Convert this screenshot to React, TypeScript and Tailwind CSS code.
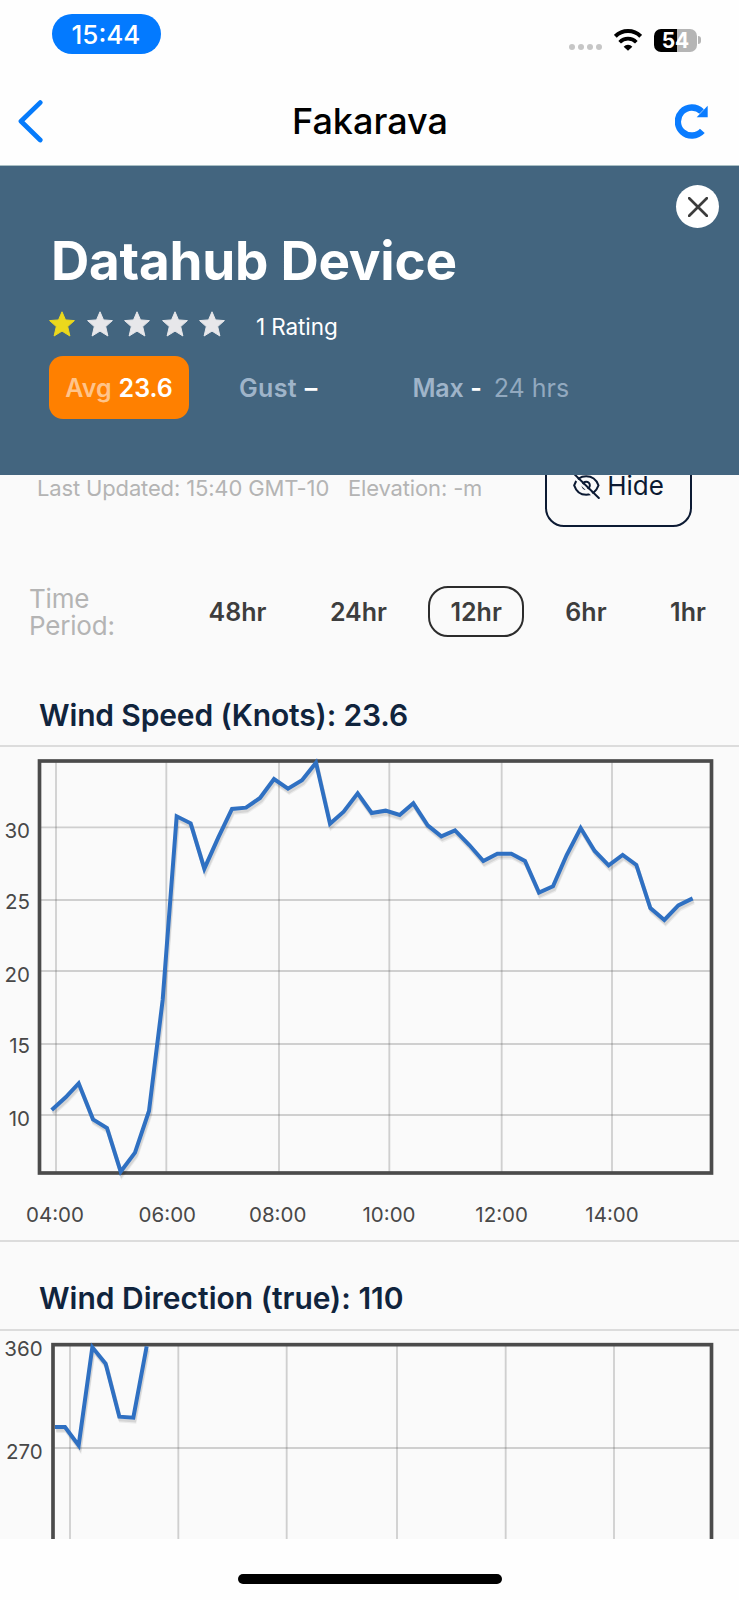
interface ChartProps {
  label: string;
  viewBox: string;
  className: string;
  frame: { x: number; y: number; width: number; height: number };
  xTicks: { x: number; text?: string; labelX?: number }[];
  yTicks: { y?: number; text: string; baseline: number }[];
  labelRight: number;
  points: string;
}

const periods = ["48hr", "24hr", "12hr", "6hr", "1hr"];

const speedPoints =
  "155,1110 197,1072 236,1030 279,1138 321,1164 362,1295 405,1238 447,1113 488,780 530,229 572,250 613,386 655,292 696,207 738,203 780,174 822,117 864,146 906,121 948,68 990,251 1031,215 1073,160 1115,219 1157,212 1199,225 1240,190 1283,256 1324,289 1365,271 1408,315 1450,363 1492,341 1534,341 1575,363 1617,458 1659,439 1700,345 1742,264 1784,333 1826,376 1868,345 1909,375 1951,504 1993,540 2035,496 2078,475";

const directionPoints =
  "165,531 195,531 236,586 277,292 317,341 358,500 400,503 440,289";

function Chart({ label, viewBox, className, frame, xTicks, yTicks, labelRight, points }: ChartProps) {
  const bottom = frame.y + frame.height;
  const right = frame.x + frame.width;

  return (
    <svg viewBox={viewBox} className={className} role="img" aria-label={label}>
      <g stroke="#545454" strokeOpacity="0.26" strokeWidth="5.5">
        {xTicks.map((tick) => (
          <line key={tick.x} x1={tick.x} x2={tick.x} y1={frame.y} y2={bottom} />
        ))}
        {yTicks.map((tick) =>
          tick.y ? <line key={tick.y} x1={frame.x} x2={right} y1={tick.y} y2={tick.y} /> : null
        )}
      </g>
      <rect {...frame} fill="none" stroke="#4b4b4b" strokeWidth="11" />
      <g fill="none" strokeLinejoin="miter">
        <polyline points={points} transform="translate(4 12)" stroke="#000" strokeOpacity="0.06" strokeWidth="12" />
        <polyline points={points} transform="translate(3 8)" stroke="#000" strokeOpacity="0.09" strokeWidth="12" />
        <polyline points={points} stroke="#2f70c2" strokeWidth="12" />
      </g>
      <g className="fill-[#484848] font-['Inter',sans-serif] text-[61.5px]">
        {yTicks.map((tick) => (
          <text key={tick.text} x={labelRight} y={tick.baseline} textAnchor="end">
            {tick.text}
          </text>
        ))}
        {xTicks.map((tick) =>
          tick.text ? (
            <text key={tick.text} x={tick.labelX} y={1446} textAnchor="middle">
              {tick.text}
            </text>
          ) : null
        )}
      </g>
    </svg>
  );
}

function Star({ filled }: { filled: boolean }) {
  return (
    <svg
      viewBox="0 0 26 26"
      className={filled ? "size-[26px] fill-[#ecd81c] stroke-[#ecd81c]" : "size-[26px] fill-[#e7e7ea] stroke-[#e7e7ea]"}
    >
      <path
        d="M13 0.8 L16.5 8.9 L25.4 9.6 L18.7 15.6 L20.9 25 L13 20.1 L5.1 25 L7.3 15.6 L0.6 9.6 L9.5 8.9 Z"
        strokeWidth="1"
        strokeLinejoin="round"
      />
    </svg>
  );
}

function StatusBar() {
  return (
    <div className="flex h-[78px] items-start justify-between pl-[52px] pr-[38px]">
      <div className="mt-[14px] flex h-[40px] w-[109px] items-center justify-center rounded-full bg-[#037aff] pr-[1px] text-[26px] font-medium text-white">
        15:44
      </div>
      <div className="mt-[28px] flex h-6 items-center">
        <div className="mt-[14px] flex gap-[3px]">
          <span className="size-[6px] rounded-full bg-[#c6c6c6]" />
          <span className="size-[6px] rounded-full bg-[#c6c6c6]" />
          <span className="size-[6px] rounded-full bg-[#c6c6c6]" />
          <span className="size-[6px] rounded-full bg-[#c6c6c6]" />
        </div>
        <svg viewBox="0 0 84 66" className="ml-[12px] h-[22px] w-[28px]" aria-label="Wi-Fi">
          <path d="M4 22 A54 54 0 0 1 80 22" fill="none" stroke="#000" strokeWidth="12" />
          <path d="M17 39.5 A35 35 0 0 1 67 39.5" fill="none" stroke="#000" strokeWidth="11" />
          <path d="M42 65 L29 53 A18 18 0 0 1 55 53 Z" />
        </svg>
        <div className="ml-[12px] flex h-[23px] w-[43px] items-center justify-center rounded-[7px] bg-[linear-gradient(90deg,#000_54%,#b5b5b5_54%)] pt-[1px] text-[21px] font-bold text-white">
          54
        </div>
        <span className="ml-[1px] h-[8px] w-[3px] rounded-r-full bg-[#b5b5b5]" />
      </div>
    </div>
  );
}

function NavBar() {
  return (
    <div className="flex h-[87px] items-center pl-[17px] pr-[30px]">
      <svg viewBox="0 0 26 44" className="-mt-[1px] h-[44px] w-[26px]" aria-label="Back">
        <path
          d="M23.2 3.6 L4 22.3 L23.2 41"
          fill="none"
          stroke="#067bfb"
          strokeWidth="4.8"
          strokeLinecap="round"
          strokeLinejoin="round"
        />
      </svg>
      <h1 className="-mt-[2px] ml-[249px] text-[36px] font-medium text-black">Fakarava</h1>
      <svg viewBox="0 0 102 104" className="ml-auto h-[35px] w-[34px]" aria-label="Refresh">
        <path d="M82 80 A42 42 0 1 1 80 22" fill="none" stroke="#0a7cff" strokeWidth="19" />
        <path d="M98 5 V39 H65 Z" fill="#0a7cff" />
      </svg>
    </div>
  );
}

function Hero() {
  return (
    <header className="relative h-[309.5px] border-t border-[#a9bfc4] bg-[#43657f] pl-[49px] pt-[65px] text-white">
      <button
        aria-label="Close"
        className="absolute right-[20px] top-[19px] flex size-[43px] items-center justify-center rounded-full bg-white"
      >
        <svg viewBox="0 0 20 20" className="size-[20px]">
          <path d="M1.2 1.2 L18.8 18.8 M18.8 1.2 L1.2 18.8" stroke="#3c3c3c" strokeWidth="2.7" strokeLinecap="round" />
        </svg>
      </button>
      <h2 className="pl-[2px] text-[53px] font-bold leading-[60px] tracking-[-0.25px]">Datahub Device</h2>
      <div className="mt-[18px] flex h-[30px] items-center">
        <div className="flex gap-[11.5px]">
          <Star filled />
          <Star filled={false} />
          <Star filled={false} />
          <Star filled={false} />
          <Star filled={false} />
        </div>
        <span className="ml-[31px] mt-[5px] text-[22.5px] tracking-[-0.1px]">1 Rating</span>
      </div>
      <div className="mt-[17px] flex h-[63px] items-center text-[25px] font-semibold text-white">
        <div className="flex h-[63px] w-[140px] items-center justify-center rounded-[14px] bg-[#ff8000] pt-[2px]">
          <span className="mr-[7px] text-[#ffc48a]">Avg</span>23.6
        </div>
        <div className="ml-[50px] flex gap-[8px] pt-[2px] tracking-[0.3px]">
          <span className="text-[#9fb4c9]">Gust</span>–
        </div>
        <div className="ml-[95px] flex gap-[7px] pt-[2px] tracking-[-0.3px]">
          <span className="text-[#9fb4c9]">Max</span>-
        </div>
        <span className="ml-[12px] pt-[2px] font-normal text-[#92a9bf]">24 hrs</span>
      </div>
    </header>
  );
}

export default function App() {
  return (
    <div className="flex h-[1600px] w-[739px] flex-col overflow-hidden bg-[#fefefe] font-['Inter','Liberation_Sans',sans-serif]">
      <StatusBar />
      <NavBar />
      <Hero />

      <main className="h-[1064.5px] overflow-hidden bg-[#fafafa]">
        <div className="flex h-[52.5px] items-start pl-[37px] pr-[47px]">
          <p className="flex whitespace-nowrap text-[22px] leading-[26px] tracking-[-0.15px] text-[#b4b4b4]">
            <span className="w-[311px]">Last Updated: 15:40 GMT-10</span>
            <span>Elevation: -m</span>
          </p>
          <button className="-mt-[30.5px] ml-auto flex h-[83px] w-[147px] items-center justify-center gap-[7px] rounded-[19px] border-2 border-[#0c1a33] text-[26px] text-[#0c1a33]">
            <svg viewBox="42 24 80 78" className="h-[26px] w-[27px]" fill="none" stroke="#0c1a33" strokeWidth="6">
              <path d="M45 61 C58 25 104 25 118 61 C104 99 58 99 45 61 Z" />
              <circle cx="81" cy="61" r="11" />
              <path d="M42 34 L112 102" stroke="#fafafa" strokeWidth="7" />
              <path d="M46 28 L119 99" strokeLinecap="round" />
            </svg>
            Hide
          </button>
        </div>

        <div className="mt-[57px] flex h-[55px] items-center pl-[29px]">
          <div className="w-[157px] pt-[1px] text-[26px] leading-[27.5px] tracking-[-0.2px] text-[#b4b4b4]">
            Time
            <br />
            Period:
          </div>
          <div className="flex gap-[18.5px] text-[25px] font-semibold text-[#3d3d3d]">
            {periods.map((period) => (
              <button
                key={period}
                className={
                  period === "12hr"
                    ? "h-[51px] rounded-[20px] border-2 border-[#2c2c2c] px-[20.5px] pt-[3px]"
                    : "h-[51px] rounded-[20px] border-2 border-transparent px-[20.5px] pt-[3px]"
                }
              >
                {period}
              </button>
            ))}
          </div>
        </div>

        <section>
          <h3 className="mt-[57px] h-[49px] pl-[39px] text-[30px] font-semibold leading-[38px] tracking-[-0.15px] text-[#10243d]">
            Wind Speed (Knots): 23.6
          </h3>
          <div className="h-[497px] border-y-2 border-[#dcdcdc]">
            <Chart
              label="Wind speed"
              viewBox="0 21 2217 1476"
              className="h-[492px] w-[739px]"
              frame={{ x: 118.5, y: 63, width: 2016, height: 1236 }}
              xTicks={[
                { x: 168, text: "04:00", labelX: 165 },
                { x: 499, text: "06:00", labelX: 502 },
                { x: 837, text: "08:00", labelX: 833 },
                { x: 1168, text: "10:00", labelX: 1167 },
                { x: 1505, text: "12:00", labelX: 1505 },
                { x: 1836, text: "14:00", labelX: 1836 },
              ]}
              yTicks={[
                { y: 262, text: "30", baseline: 294 },
                { y: 480, text: "25", baseline: 507 },
                { y: 693, text: "20", baseline: 725 },
                { y: 912, text: "15", baseline: 938 },
                { y: 1125, text: "10", baseline: 1158 },
              ]}
              labelRight={90}
              points={speedPoints}
            />
          </div>
        </section>

        <section>
          <h3 className="mt-[37px] h-[50px] pl-[39px] text-[30px] font-semibold leading-[38px] text-[#10243d]">
            Wind Direction (true): 110
          </h3>
          <div className="border-t-2 border-[#dcdcdc]">
            <Chart
              label="Wind direction"
              viewBox="0 243 2217 624"
              className="h-[208px] w-[739px]"
              frame={{ x: 159, y: 284, width: 1975.5, height: 900 }}
              xTicks={[{ x: 210 }, { x: 535 }, { x: 860 }, { x: 1191 }, { x: 1517 }, { x: 1842 }]}
              yTicks={[
                { text: "360", baseline: 319 },
                { y: 594, text: "270", baseline: 626 },
              ]}
              labelRight={128}
              points={directionPoints}
            />
          </div>
        </section>
      </main>

      <div className="flex h-[61px] justify-center">
        <div className="mt-[35px] h-[10px] w-[264px] rounded-full bg-black" />
      </div>
    </div>
  );
}
